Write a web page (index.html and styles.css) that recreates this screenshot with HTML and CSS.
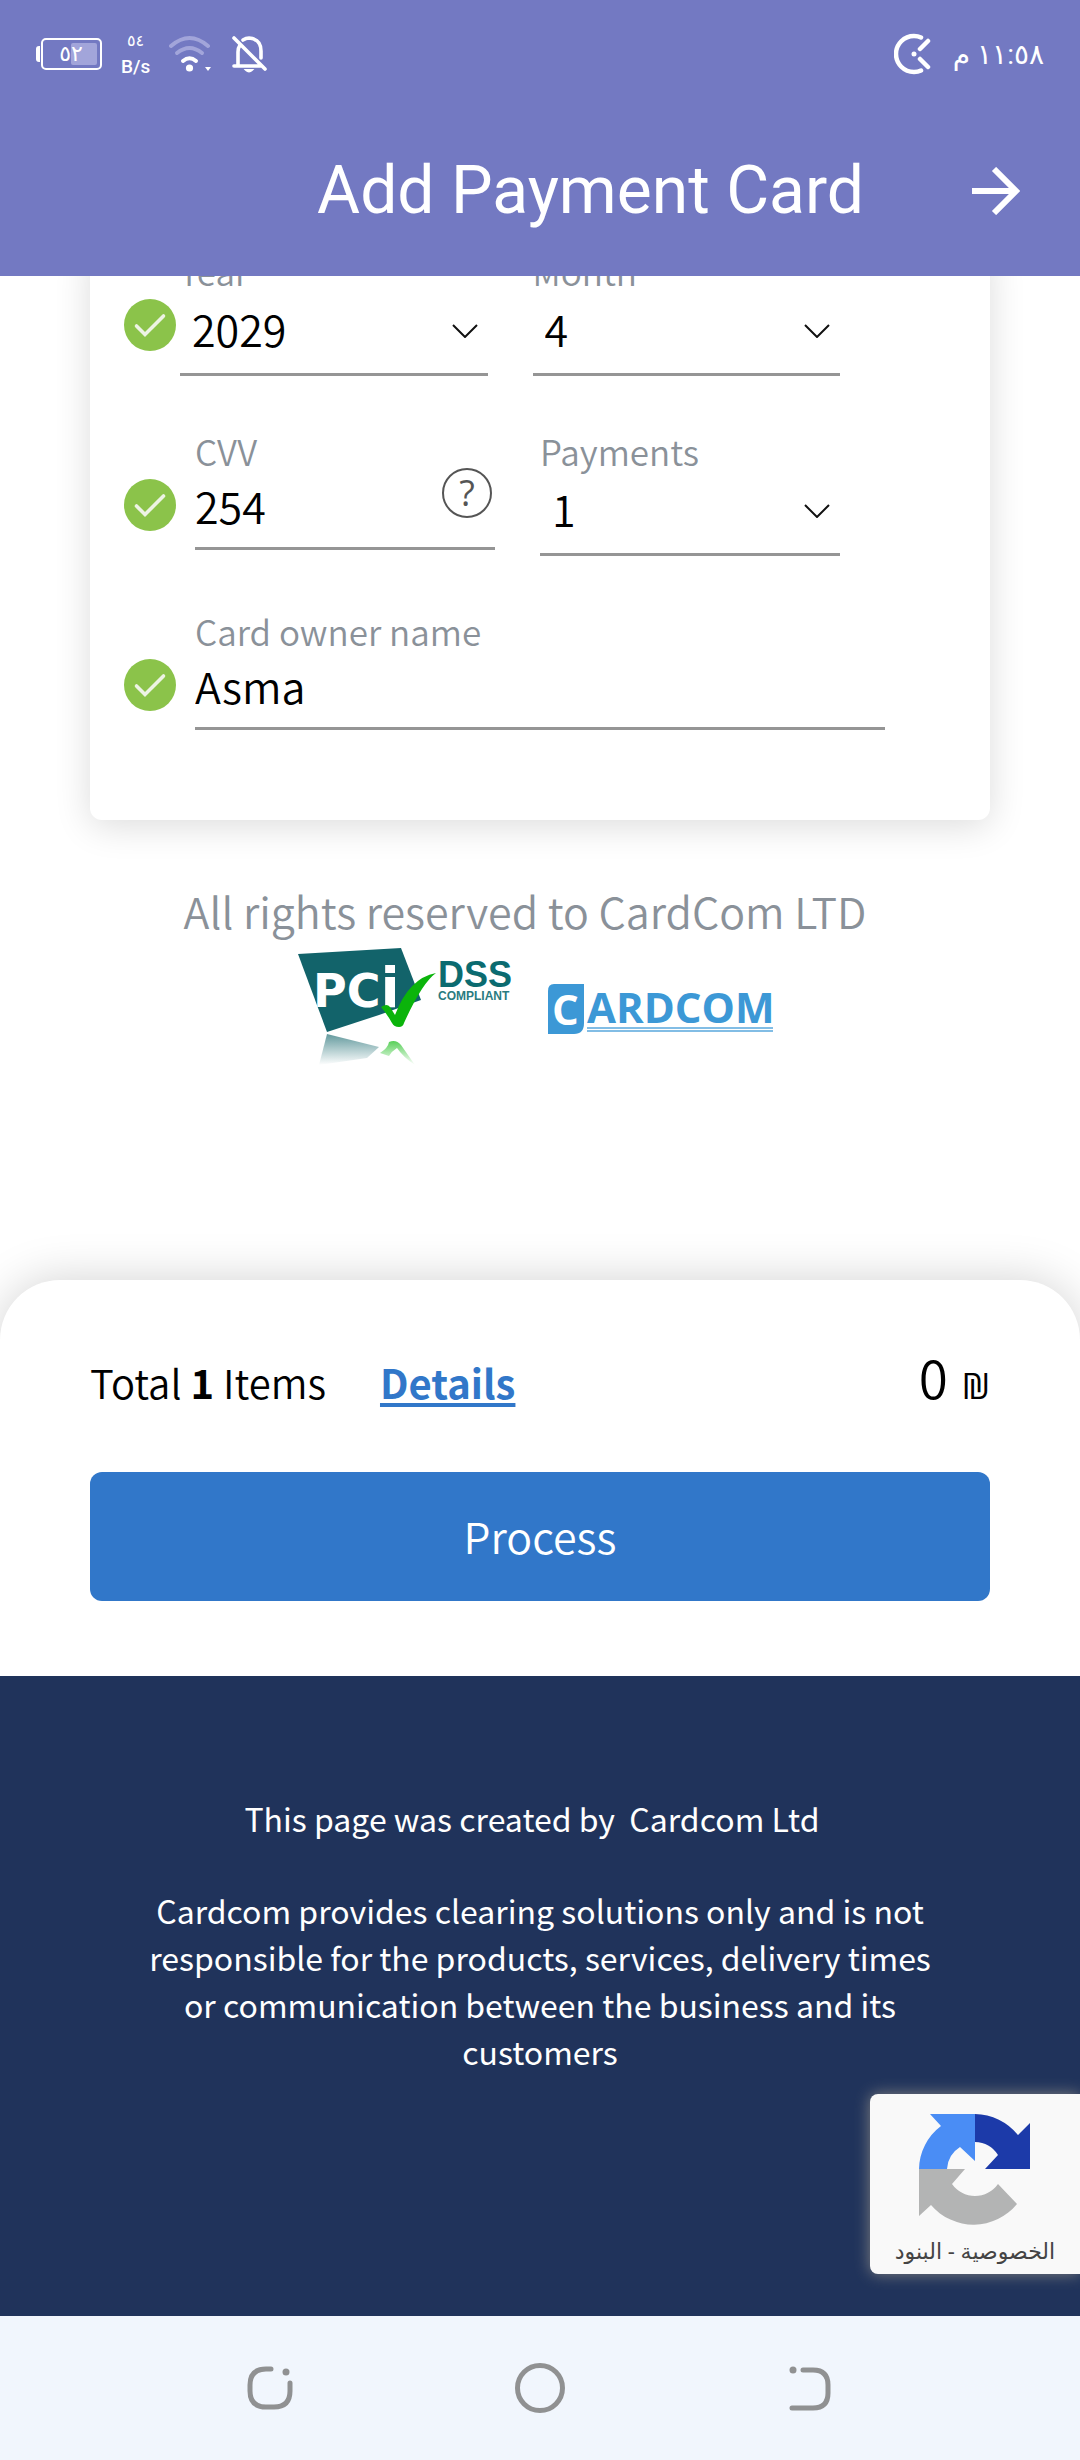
FILE: index.html
```
<!DOCTYPE html>
<html lang="en">
<head>
<meta charset="utf-8">
<meta name="viewport" content="width=device-width, initial-scale=1">
<title>Add Payment Card</title>
<link rel="stylesheet" href="styles.css">
</head>
<body>
<svg class="defs" aria-hidden="true">
  <symbol id="check" viewBox="0 0 52 52">
    <circle cx="26" cy="26" r="26" fill="#8bc34a"/>
    <path d="M12.500 27 21 35.500 39.500 17" fill="none" stroke="#edf3e4" stroke-width="3.600" stroke-linecap="round"/>
  </symbol>
  <symbol id="chevron" viewBox="0 0 26 14">
    <path d="M1 1 13 13 25 1" fill="none" stroke="#111" stroke-width="2"/>
  </symbol>
</svg>

<header class="top">
  <div class="status">
    <div class="status-group">
      <div class="battery">
        <svg width="66" height="34" viewBox="0 0 66 34" aria-hidden="true">
          <path d="M4 9v16H3a3 3 0 0 1-3-3V12a3 3 0 0 1 3-3z" fill="#fff"/>
          <rect x="6" y="2" width="59" height="30" rx="4" fill="none" stroke="#fff" stroke-width="2"/>
          <rect x="35" y="6" width="26" height="22" rx="2" fill="#a2a5da"/>
        </svg>
        <span class="battery-level">٥٢</span>
      </div>
      <div class="speed"><span class="speed-value">٥٤</span><span class="speed-unit">B/s</span></div>
      <svg width="44" height="38" viewBox="0 0 44 38" fill="none" stroke-width="4" stroke-linecap="round" aria-hidden="true">
        <path d="M2 11q18.500-16 37 0" stroke="#a2a5da"/>
        <path d="M8 18q12.500-10 25 0" stroke="#a2a5da"/>
        <path d="M14 26q6.500-5.500 13 0" stroke="#fff"/>
        <circle cx="20.500" cy="33" r="3.600" fill="#fff"/>
        <path d="M36 32h6l-3 4z" fill="#fff"/>
      </svg>
      <svg width="36" height="38" viewBox="0 0 36 38" fill="none" stroke="#fff" stroke-width="3.600" stroke-linecap="round" aria-hidden="true">
        <path d="M2 31h27M6 31V17q0-4 2-7M11 5q3-2 6-2 12 1 12 13v7M2 3l31 31"/>
        <path d="M14 35h6q-3 3-6 0z" stroke-width="2" fill="#fff"/>
      </svg>
    </div>
    <div class="status-group status-end">
      <svg width="37" height="42" viewBox="0 0 37 42" fill="none" stroke="#fff" stroke-width="4.500" stroke-linecap="round" aria-hidden="true">
        <path d="M27 4.500Q24 3 20 3a18 18 0 0 0 0 36q4 0 7-1.500M26 16l8-8M26 26l8 8"/>
        <circle cx="20" cy="21" r="2.500" fill="#fff" stroke="none"/>
      </svg>
      <time class="clock" dir="rtl">١١:٥٨ م</time>
    </div>
  </div>
  <div class="title-bar">
    <h1 class="title">Add Payment Card</h1>
    <button class="back" type="button" aria-label="Back">
      <svg width="48" height="48" viewBox="0 0 48 48" fill="none" stroke="#fff" stroke-width="6" aria-hidden="true">
        <path d="M0 24h44M22 2l22 22-22 22"/>
      </svg>
    </button>
  </div>
</header>

<main class="content">
  <form class="card">
    <div class="row row-selects">
      <svg class="check"><use href="#check"/></svg>
      <div class="field">
        <label for="year">Year</label>
        <select id="year"><option>2029</option></select>
        <svg class="chevron"><use href="#chevron"/></svg>
      </div>
      <div class="field">
        <label for="month">Month</label>
        <select id="month"><option>4</option></select>
        <svg class="chevron"><use href="#chevron"/></svg>
      </div>
    </div>
    <div class="row">
      <svg class="check"><use href="#check"/></svg>
      <div class="field">
        <label for="cvv">CVV</label>
        <input id="cvv" type="text" value="254">
        <button class="help" type="button" aria-label="What is CVV">?</button>
      </div>
      <div class="field">
        <label for="payments">Payments</label>
        <select id="payments"><option>1</option></select>
        <svg class="chevron"><use href="#chevron"/></svg>
      </div>
    </div>
    <div class="row row-wide">
      <svg class="check"><use href="#check"/></svg>
      <div class="field">
        <label for="owner">Card owner name</label>
        <input id="owner" type="text" value="Asma">
      </div>
    </div>
  </form>

  <section class="rights">
    <p class="rights-text">All rights reserved to CardCom LTD</p>
    <div class="logos">
      <svg width="220" height="126" viewBox="0 0 220 126" role="img" aria-label="PCI DSS Compliant">
        <defs>
          <linearGradient id="fade" x1="0" y1="0" x2="0" y2="1">
            <stop offset="0" stop-color="#0f6369" stop-opacity=".65"/>
            <stop offset="1" stop-color="#0f6369" stop-opacity="0"/>
          </linearGradient>
          <linearGradient id="fade-green" x1="0" y1="0" x2="0" y2="1">
            <stop offset="0" stop-color="#2fc42f" stop-opacity=".8"/>
            <stop offset="1" stop-color="#2fc42f" stop-opacity="0"/>
          </linearGradient>
        </defs>
        <path d="M1 8 104 2 124 54 82 69 30 86z" fill="#12636a"/>
        <path d="M30 88 82 101 70 112 22 119z" fill="url(#fade)"/>
        <path d="M83 107q8-5 9-11 7-3 12 3l14 20q-12-8-18-17-5 3-8 8z" fill="url(#fade-green)"/>
        <text x="16" y="61" fill="#fff" class="logo-pci">PC<tspan class="logo-pci-i">i</tspan></text>
        <path d="M84 61q6-4 9 0l5 8q14-37 41-42-14 10-32 50-1 4-5 4-5 0-7-4-5-9-11-16z" fill="#0bb40b"/>
        <text x="141" y="41" fill="#0b6b70" class="logo-dss">DSS</text>
        <text x="141" y="54" fill="#2a7b80" class="logo-compliant">COMPLIANT</text>
      </svg>
      <svg width="228" height="60" viewBox="0 -4 228 60" role="img" aria-label="Cardcom">
        <path d="M7 1h30v39q0 11-10 11H1V8q0-7 6-7z" fill="#3c98d6"/>
        <text x="5" y="42" fill="#fff" class="logo-cardcom">C</text>
        <text x="40" y="40" fill="#3c98d6" class="logo-cardcom">ARDCOM</text>
        <path d="M40 45h186M40 48h186" stroke="#5aa8dd" stroke-width="1.500"/>
      </svg>
    </div>
  </section>

  <section class="summary">
    <div class="summary-row">
      <span>Total <b>1</b> Items</span>
      <a class="details" href="#details">Details</a>
      <span class="amount">0 <span class="currency">₪</span></span>
    </div>
    <button class="process" type="button">Process</button>
  </section>

  <footer class="footer">
    <p class="created">This page was created by&nbsp; Cardcom Ltd</p>
    <p>Cardcom provides clearing solutions only and is not responsible for the products, services, delivery times or communication between the business and its customers</p>
  </footer>
</main>

<aside class="captcha">
  <svg width="112" height="112" viewBox="0 0 112 112" aria-hidden="true">
    <path d="M56 0a56 56 0 0 1 43 21L111 9v46H66l13-14A28 28 0 0 0 56 28z" fill="#1c3aa9"/>
    <path d="M56 0H11l11 12A55 55 0 0 0 0 55h28a28 28 0 0 1 13-22l15 14z" fill="#4a8df5"/>
    <path d="M0 55h46L33 70a28 28 0 0 0 46 0l19 20A56 56 0 0 1 12 91L0 102z" fill="#b3b4b4"/>
  </svg>
  <p class="captcha-links" dir="rtl"><a href="#privacy">الخصوصية</a> - <a href="#terms">البنود</a></p>
</aside>

<nav class="nav-bar">
  <button type="button" aria-label="Recent apps">
    <svg width="50" height="50" viewBox="0 0 50 50" fill="none" stroke="#909192" stroke-width="5" stroke-linecap="round"><path d="M26 6h-5Q5 6 5 22v6Q5 44 21 44h8Q45 44 45 28v-8"/><circle cx="41" cy="9" r="3.500" fill="#909192" stroke="none"/></svg>
  </button>
  <button type="button" aria-label="Home">
    <svg width="50" height="50" viewBox="0 0 50 50" fill="none" stroke="#909192" stroke-width="5"><circle cx="25" cy="25" r="22.500"/></svg>
  </button>
  <button type="button" aria-label="Back">
    <svg width="50" height="50" viewBox="0 0 50 50" fill="none" stroke="#909192" stroke-width="5" stroke-linecap="round"><path d="M18 7h10Q43 7 43 22v8Q43 45 28 45H7"/><circle cx="8" cy="7" r="3.500" fill="#909192" stroke="none"/></svg>
  </button>
</nav>
</body>
</html>
```
FILE: styles.css
```
* {
  box-sizing: border-box;
}

body {
  margin: 0;
  min-height: 100vh;
  display: flex;
  flex-direction: column;
  position: relative;
  background: #fff;
  color: #000;
  font-family: "Noto Sans CJK SC", "Noto Sans", sans-serif;
  font-size: 43px;
  font-weight: 350;
}

p,
h1 {
  margin: 0;
  font-weight: inherit;
}

button {
  padding: 0;
  border: 0;
  background: none;
  font: inherit;
}

svg {
  display: block;
}

.defs {
  position: absolute;
  width: 0;
  height: 0;
}

/* App header */
.top {
  position: relative;
  z-index: 1;
  height: 276px;
  background: #7379c2;
  color: #fff;
  font-family: Roboto, "DejaVu Sans", sans-serif;
  font-weight: 400;
}

.status {
  display: flex;
  justify-content: space-between;
  align-items: center;
  height: 108px;
  padding: 0 36px;
}

.status-group {
  display: flex;
  align-items: center;
  gap: 19px;
}

.status-end {
  gap: 22px;
}

.battery {
  position: relative;
}

.battery-level {
  position: absolute;
  inset: 0 0 0 4px;
  font-size: 22px;
  line-height: 34px;
  text-align: center;
}

.speed {
  display: flex;
  flex-direction: column;
  align-items: center;
  font-weight: 500;
  font-size: 19px;
  line-height: 26px;
}

.speed-value {
  font-size: 16px;
}

.clock {
  font-size: 28px;
}

.title-bar {
  display: flex;
  align-items: center;
  justify-content: flex-end;
  height: 168px;
  padding: 0 60px 2px 0;
  gap: 108px;
}

.title {
  font-size: 66px;
  line-height: 80px;
}

/* Card form */
.content {
  flex: 1;
  display: flex;
  flex-direction: column;
}

.card {
  margin: -31px 90px 0;
  padding: 0 150px 35px 34px;
  border-radius: 12px;
  box-shadow: 0 6px 36px rgba(0, 0, 0, .14);
}

.row {
  display: flex;
  align-items: flex-start;
  height: 180px;
  gap: 45px;
}

.row-wide {
  margin-right: -45px;
}

.check {
  flex: none;
  width: 52px;
  height: 52px;
  margin: 54px -26px 0 0;
}

.row-selects .check {
  margin-right: -41px;
}

.field {
  position: relative;
  flex: 1;
  min-width: 0;
}

.field label {
  display: block;
  color: #8a9199;
  font-size: 35px;
  line-height: 52px;
  height: 48px;
}

.field input,
.field select {
  display: block;
  width: 100%;
  margin: 0;
  border: 0;
  border-bottom: 3px solid #959595;
  border-radius: 0;
  outline: 0;
  background: none;
  color: #000;
  font: inherit;
  appearance: none;
}

.field input {
  height: 77px;
  padding: 0 60px 10px 0;
}

.field select {
  height: 83px;
  padding: 0 48px 10px 12px;
}

.chevron {
  position: absolute;
  right: 10px;
  bottom: 38px;
  width: 26px;
  height: 14px;
  pointer-events: none;
}

.help {
  position: absolute;
  top: 43px;
  right: 3px;
  width: 50px;
  height: 50px;
  border: 2px solid #555;
  border-radius: 50%;
  color: #555;
  font-family: "Open Sans", sans-serif;
  font-size: 36px;
  font-weight: 500;
  line-height: 44px;
}

/* Rights and logos */
.rights {
  padding: 60px 30px 0 0;
  color: #8a9199;
  text-align: center;
}

.rights-text {
  line-height: 60px;
}

.logos {
  display: flex;
  justify-content: center;
  align-items: center;
  gap: 30px;
  margin: 6px 0 0 22px;
}

.logo-pci {
  font: 700 46px "DejaVu Sans", sans-serif;
}

.logo-pci-i {
  font-size: 56px;
}

.logo-dss {
  font: 700 36px "Liberation Sans", sans-serif;
}

.logo-compliant {
  font: 700 12px "Liberation Sans", sans-serif;
}

.logo-cardcom {
  font: 700 42px "Open Sans", sans-serif;
}

/* Order summary */
.summary {
  margin-top: auto;
  padding: 60px 90px 75px;
  border-radius: 60px 60px 0 0;
  background: #fff;
  box-shadow: 0 0 48px rgba(0, 0, 0, .18);
}

.summary-row {
  display: flex;
  align-items: baseline;
  gap: 54px;
  height: 132px;
  font-size: 40px;
  line-height: 72px;
}

.details {
  color: #3177c9;
  font-weight: 700;
  text-decoration-thickness: 4px;
  text-underline-offset: 4px;
}

.amount {
  display: flex;
  align-items: baseline;
  gap: 14px;
  margin-left: auto;
  font-size: 53px;
}

.currency {
  font-family: "Open Sans", sans-serif;
  font-size: 36px;
  font-weight: 400;
}

.process {
  display: block;
  width: 100%;
  height: 129px;
  padding-bottom: 4px;
  border-radius: 12px;
  background: #3177c9;
  color: #fff;
}

/* Footer */
.footer {
  height: 640px;
  padding: 119px 140px 0;
  background: #20335b;
  color: #fff;
  font-size: 32px;
  font-weight: 400;
  line-height: 47px;
  text-align: center;
}

.created {
  margin: 0 16px 45px 0;
}

.captcha {
  position: absolute;
  right: 0;
  bottom: 186px;
  display: flex;
  flex-direction: column;
  align-items: center;
  width: 210px;
  height: 180px;
  padding-top: 20px;
  border-radius: 8px 0 0 8px;
  background: #f9f9f9;
  box-shadow: 0 0 15px #808080;
}

.captcha-links {
  color: #444;
  font-family: "Noto Sans", "DejaVu Sans", sans-serif;
  font-size: 22px;
  font-weight: 400;
  line-height: 48px;
  white-space: nowrap;
}

.captcha-links a {
  color: inherit;
  text-decoration: none;
}

/* System navigation */
.nav-bar {
  display: flex;
  justify-content: space-between;
  align-items: center;
  height: 144px;
  padding: 0 245px;
  background: #f1f6fd;
}
```
